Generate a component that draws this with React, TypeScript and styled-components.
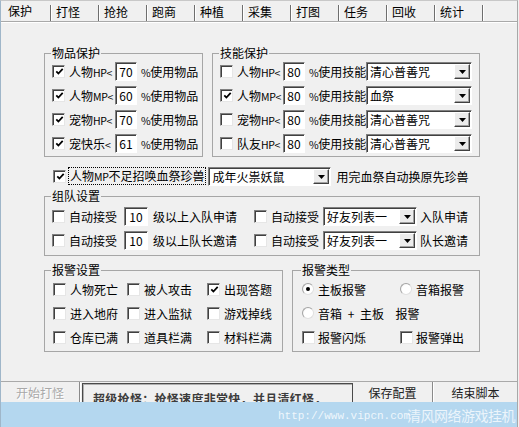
import React, { FC, ReactNode } from 'react'
import styled, { createGlobalStyle } from 'styled-components'

const GlobalStyle = createGlobalStyle`
  html, body { margin: 0; padding: 0; background: #f0f0f0; }
  body {
    font-family: "Noto Sans CJK SC", "Liberation Sans", sans-serif;
    font-size: 12px;
    color: #000;
  }
  * { box-sizing: border-box; }
`

const tabs = ['保护', '打怪', '抢抢', '跑商', '种植', '采集', '打图', '任务', '回收', '统计']

const itemRows = [
  { on: true, label: '人物HP<', value: '70' },
  { on: true, label: '人物MP<', value: '60' },
  { on: true, label: '宠物HP<', value: '70' },
  { on: true, label: '宠快乐<', value: '61' },
]

const skillRows = [
  { on: false, label: '人物HP<', value: '80', skill: '清心普善咒' },
  { on: true, label: '人物MP<', value: '80', skill: '血祭' },
  { on: false, label: '宠物HP<', value: '80', skill: '清心普善咒' },
  { on: false, label: '队友HP<', value: '80', skill: '清心普善咒' },
]

const teamRows = [
  { text: '级以上入队申请', tail: '入队申请' },
  { text: '级以上队长邀请', tail: '队长邀请' },
]

const alarms = [
  { label: '人物死亡', on: false }, { label: '被人攻击', on: false }, { label: '出现答题', on: true },
  { label: '进入地府', on: false }, { label: '进入监狱', on: false }, { label: '游戏掉线', on: false },
  { label: '仓库已满', on: false }, { label: '道具栏满', on: false }, { label: '材料栏满', on: false },
]

// half-width latin runs are narrow in the original bitmap font
const mixed = (s: string): ReactNode[] =>
  s.split(/([A-Za-z%<]+)/).filter(Boolean).map((part, i) =>
    /[A-Za-z%<]/.test(part) ? <S.Asc key={i}>{part}</S.Asc> : part)

const Check: FC<{ on?: boolean }> = ({ on }) => (
  <S.CheckBox>
    {on && (
      <svg width="9" height="9" viewBox="0 0 9 9">
        <path d="M1.3 4.3 L3.4 6.5 L7.7 1.9" stroke="#000" strokeWidth="1.8" fill="none" />
      </svg>
    )}
  </S.CheckBox>
)

const Radio: FC<{ on?: boolean }> = ({ on }) => (
  <S.RadioDot>{on && <S.RadioPip />}</S.RadioDot>
)

const Combo: FC<{ value: string, width: number }> = ({ value, width }) => (
  <S.Combo $w={width}>
    <S.ComboText>{value}</S.ComboText>
    <S.DropButton>
      <svg width="7" height="4" viewBox="0 0 7 4"><path d="M0 0 H7 L3.5 4 Z" fill="#000" /></svg>
    </S.DropButton>
  </S.Combo>
)

export default function App() {
  return (
    <>
      <GlobalStyle />
      <S.Window>
        <S.TabBar>
          {tabs.map((t, i) => (
            <S.Tab key={t} $active={i === 0}>
              <span>{t}</span>
              <S.TabSep />
            </S.Tab>
          ))}
        </S.TabBar>

        <S.Content>
          <S.GroupRow>
            <S.Group $w={159} $pb={1}>
              <S.Legend>物品保护</S.Legend>
              {itemRows.map(r => (
                <S.Row key={r.label}>
                  <Check on={r.on} />
                  <S.FieldLabel>{mixed(r.label)}</S.FieldLabel>
                  <S.NumField $w={22}>{r.value}</S.NumField>
                  <S.Text $ml={4}>{mixed('%使用物品')}</S.Text>
                </S.Row>
              ))}
            </S.Group>
            <S.Group $w={268} $pb={1}>
              <S.Legend>技能保护</S.Legend>
              {skillRows.map(r => (
                <S.Row key={r.label}>
                  <Check on={r.on} />
                  <S.FieldLabel>{mixed(r.label)}</S.FieldLabel>
                  <S.NumField $w={22}>{r.value}</S.NumField>
                  <S.SkillText>{mixed('%使用技能')}</S.SkillText>
                  <Combo value={r.skill} width={106} />
                </S.Row>
              ))}
            </S.Group>
          </S.GroupRow>

          <S.SummonRow>
            <Check on />
            <S.FocusLabel>{mixed('人物MP不足招唤血祭珍兽')}</S.FocusLabel>
            <Combo value="成年火祟妖鼠" width={123} />
            <S.Text $ml={5}>用完血祭自动换原先珍兽</S.Text>
          </S.SummonRow>

          <S.Group $w={436} $pt={2} $pb={3} $mt={4}>
            <S.Legend>组队设置</S.Legend>
            {teamRows.map(r => (
              <S.Row key={r.tail}>
                <S.Half>
                  <Check />
                  <S.Text>自动接受</S.Text>
                  <S.NumField $w={24} $ml={7}>10</S.NumField>
                  <S.Text $ml={5}>{r.text}</S.Text>
                </S.Half>
                <Check />
                <S.Text>自动接受</S.Text>
                <S.ComboGap><Combo value="好友列表一" width={94} /></S.ComboGap>
                <S.Text $ml={3}>{r.tail}</S.Text>
              </S.Row>
            ))}
          </S.Group>

          <S.GroupRow $mt={8}>
            <S.Group $w={239} $pt={1} $pb={2}>
              <S.Legend>报警设置</S.Legend>
              <S.AlarmGrid>
                {alarms.map(a => (
                  <S.Cell key={a.label}>
                    <Check on={a.on} />
                    <S.Text $ml={4}>{a.label}</S.Text>
                  </S.Cell>
                ))}
              </S.AlarmGrid>
            </S.Group>
            <S.Group $w={188} $pt={1} $pb={2} $pl={9}>
              <S.Legend>报警类型</S.Legend>
              <S.TypeGrid>
                <S.Cell><Radio on /><S.Text $ml={4}>主板报警</S.Text></S.Cell>
                <S.Cell><Radio /><S.Text $ml={4}>音箱报警</S.Text></S.Cell>
                <S.Cell $span><Radio /><S.SpacedText>音箱 + 主板  报警</S.SpacedText></S.Cell>
                <S.Cell><Check /><S.Text $ml={3}>报警闪烁</S.Text></S.Cell>
                <S.Cell><Check /><S.Text $ml={3}>报警弹出</S.Text></S.Cell>
              </S.TypeGrid>
            </S.Group>
          </S.GroupRow>
        </S.Content>

        <S.Footer>
          <S.FootButton $w={78} $disabled>开始打怪</S.FootButton>
          <S.Divider />
          <S.InfoBox>超级抢怪：抢怪速度非常快．并且清红怪．</S.InfoBox>
          <S.FootButton $w={79}>保存配置</S.FootButton>
          <S.Divider />
          <S.FootButton>结束脚本</S.FootButton>
        </S.Footer>

        <S.Watermark>
          <S.WmUrl>http://www.vipcn.com</S.WmUrl>
          <S.WmName>清风网络游戏挂机</S.WmName>
        </S.Watermark>
      </S.Window>
    </>
  )
}

const S = {
  Window: styled.div`
    position: relative;
    width: 518px;
    height: 427px;
    overflow: hidden;
    display: flex;
    flex-direction: column;
    background: #f0f0f0;
    border-left: 1px solid #9fb6c9;
    border-right: 1px solid #a8a8a8;
    border-top: 1px solid #c8c8c8;
  `,
    TabBar: styled.div`
      display: flex;
      height: 21px;
      padding-left: 3px;
      border-bottom: 1px solid #a9a9a9;
      box-shadow: 0 1px 0 #fff;
    `,
      Tab: styled.div<{ $active?: boolean }>`
        width: 48px;
        display: flex;
        align-items: center;
        justify-content: space-between;
        padding-left: 4px;
        padding-top: ${p => p.$active ? 0 : 2}px;
        font-size: 12px;
        line-height: 14px;
      `,
      TabSep: styled.span`
        align-self: flex-end;
        width: 2px;
        height: 16px;
        border-left: 1px solid #6e6e6e;
        border-right: 1px solid #fff;
      `,
    Content: styled.div`
      flex: 1;
      display: flex;
      flex-direction: column;
      align-items: flex-start;
      padding: 25px 0 0 43px;
    `,
      GroupRow: styled.div<{ $mt?: number }>`
        display: flex;
        gap: 9px;
        margin-top: ${p => p.$mt || 0}px;
      `,
      Group: styled.fieldset<{ $w: number, $pt?: number, $pb?: number, $pl?: number, $mt?: number }>`
        width: ${p => p.$w}px;
        min-width: 0;
        margin: ${p => p.$mt || 0}px 0 0 0;
        padding: ${p => p.$pt || 0}px 0 ${p => p.$pb || 0}px ${p => p.$pl || 7}px;
        border: 1px solid #a6a6a6;
      `,
        Legend: styled.legend`
          padding: 0 1px;
          margin-left: -1px;
          line-height: 12px;
          font-size: 12px;
        `,
        Row: styled.div`
          display: flex;
          align-items: center;
          height: 24px;
          white-space: nowrap;
        `,
          Asc: styled.span`
            font-size: 10.5px;
            letter-spacing: -0.4px;
          `,
          FieldLabel: styled.span`
            width: 46px;
            margin-left: 4px;
            white-space: nowrap;
          `,
          Text: styled.span<{ $ml?: number }>`
            margin-left: ${p => p.$ml ?? 4}px;
            white-space: nowrap;
          `,
          SpacedText: styled.span`
            margin-left: 4px;
            white-space: pre;
            word-spacing: 3px;
          `,
          SkillText: styled.span`
            width: 57px;
            margin-left: 4px;
            white-space: nowrap;
          `,
          NumField: styled.div<{ $w: number, $ml?: number }>`
            width: ${p => p.$w}px;
            height: 19px;
            margin-left: ${p => p.$ml || 0}px;
            display: flex;
            align-items: center;
            justify-content: center;
            background: #fff;
            border: 1px solid;
            border-color: #808080 #fff #fff #808080;
            box-shadow: inset 1px 1px 0 #404040;
            font-size: 12px;
            padding-top: 1px;
          `,
          Half: styled.div`
            display: flex;
            align-items: center;
            width: 202px;
          `,
          ComboGap: styled.div`
            margin-left: 4px;
          `,
        CheckBox: styled.span`
          width: 13px;
          height: 13px;
          flex: none;
          display: flex;
          align-items: center;
          justify-content: center;
          background: #fff;
          border: 1px solid;
          border-color: #808080 #e6e6e6 #e6e6e6 #808080;
          box-shadow: inset 1px 1px 0 #404040;
          padding: 1px 0 0 1px;
        `,
        RadioDot: styled.span`
          width: 12px;
          height: 12px;
          flex: none;
          border-radius: 50%;
          display: flex;
          align-items: center;
          justify-content: center;
          background: radial-gradient(circle at 60% 60%, #fff 55%, #e4e4e4);
          border: 1px solid #a4a4a4;
          border-right-color: #e0e0e0;
          border-bottom-color: #e0e0e0;
        `,
          RadioPip: styled.span`
            width: 4px;
            height: 4px;
            border-radius: 50%;
            background: #000;
          `,
        Combo: styled.div<{ $w: number }>`
          width: ${p => p.$w}px;
          height: 19px;
          flex: none;
          display: flex;
          align-items: center;
          background: #fff;
          border: 1px solid;
          border-color: #808080 #fff #fff #808080;
          box-shadow: inset 1px 1px 0 #404040;
          padding: 1px 1px 0 1px;
        `,
          ComboText: styled.span`
            flex: 1;
            padding-left: 2px;
            white-space: nowrap;
            overflow: hidden;
          `,
          DropButton: styled.span`
            width: 16px;
            height: 15px;
            display: flex;
            align-items: center;
            justify-content: center;
            background: #ececec;
            border: 1px solid;
            border-color: #fff #404040 #404040 #fff;
            box-shadow: inset -1px -1px 0 #a0a0a0;
          `,
      SummonRow: styled.div`
        display: flex;
        align-items: center;
        height: 20px;
        margin-top: 9px;
        padding-left: 9px;
      `,
        FocusLabel: styled.span`
          margin: 0 3px 0 3px;
          padding: 0 1px;
          line-height: 15px;
          outline: 1px dotted #000;
          white-space: nowrap;
        `,
      AlarmGrid: styled.div`
        display: grid;
        grid-template-columns: 74px 80px 1fr;
        grid-auto-rows: 24px;
        padding-left: 1px;
      `,
      TypeGrid: styled.div`
        display: grid;
        grid-template-columns: 98px 1fr;
        grid-auto-rows: 24px;
      `,
        Cell: styled.div<{ $span?: boolean }>`
          display: flex;
          align-items: center;
          white-space: nowrap;
          grid-column: ${p => p.$span ? '1 / span 2' : 'auto'};
        `,
    Footer: styled.div`
      height: 46px;
      flex: none;
      display: flex;
      align-items: flex-start;
      border-top: 1px solid #a9a9a9;
    `,
      FootButton: styled.div<{ $w?: number, $disabled?: boolean }>`
        ${p => p.$w ? `width: ${p.$w}px;` : 'flex: 1;'}
        padding-top: 4px;
        line-height: 14px;
        text-align: center;
        color: ${p => p.$disabled ? '#a8a8a8' : '#222'};
        text-shadow: ${p => p.$disabled ? '1px 1px 0 #fff' : 'none'};
      `,
      Divider: styled.div`
        align-self: stretch;
        width: 2px;
        border-left: 1px solid #8a8a8a;
        border-right: 1px solid #fff;
      `,
      InfoBox: styled.div`
        width: 271px;
        height: 40px;
        margin: 1px 0 0 1px;
        padding: 6px 0 0 10px;
        border: 1px solid #4a4a4a;
        box-shadow: inset 1px 1px 0 #b0b0b0;
        font-weight: bold;
        color: #3c3c3c;
        letter-spacing: 0.3px;
        white-space: nowrap;
      `,
    Watermark: styled.div`
      position: absolute;
      left: 0;
      right: 0;
      bottom: 0;
      height: 25px;
      display: flex;
      align-items: center;
      justify-content: flex-end;
      padding-right: 2px;
      background: #b4d7ef;
      color: rgba(255, 255, 255, 0.8);
    `,
      WmUrl: styled.span`
        font-family: "Liberation Mono", monospace;
        font-size: 11px;
        padding-top: 2px;
      `,
      WmName: styled.span`
        margin-left: -3px;
        font-size: 14px;
        letter-spacing: -0.5px;
        color: rgba(255, 255, 255, 0.75);
      `,
}
